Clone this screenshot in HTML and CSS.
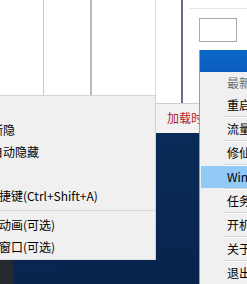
FILE: index.html
```html
<!DOCTYPE html>
<html lang="zh-CN">
<head>
<meta charset="utf-8">
<title>菜单</title>
<link rel="stylesheet" href="styles.css">
</head>
<body>
<div class="desktop">
  <div class="taskcorner"></div>

  <div class="win-back">
    <div class="top-area">
      <div class="cell c1"></div>
      <div class="cell c2"></div>
      <div class="cell c3"></div>
      <div class="pane">
        <div class="pane-gap"></div>
        <div class="divider"></div>
        <div class="pane-right">
          <div class="rule"></div>
          <div class="field"></div>
        </div>
      </div>
    </div>
    <div class="status"><span class="status-text">加载时间：0.3秒</span></div>
  </div>

  <div class="menu-left">
    <div class="item inset">置顶</div>
    <div class="item inset">淡入渐隐</div>
    <div class="item inset">开机自动隐藏</div>
    <div class="item inset">锁定</div>
    <div class="item">全局快捷键(Ctrl+Shift+A)</div>
    <div class="sep"></div>
    <div class="item">弹出框动画(可选)</div>
    <div class="item">显示主窗口(可选)</div>
  </div>

  <div class="menu-right">
    <div class="menu-head"></div>
    <div class="ritem disabled">最新版本</div>
    <div class="ritem">重启程序</div>
    <div class="rsep"></div>
    <div class="ritem">流量监控</div>
    <div class="rsep"></div>
    <div class="ritem">修仙模式</div>
    <div class="rsep"></div>
    <div class="ritem active">Win7风格</div>
    <div class="rsep"></div>
    <div class="ritem">任务管理器</div>
    <div class="rsep"></div>
    <div class="ritem">开机启动</div>
    <div class="rsep"></div>
    <div class="ritem">关于</div>
    <div class="rsep"></div>
    <div class="ritem">退出</div>
  </div>
</div>
</body>
</html>
```
FILE: styles.css
```css
* { box-sizing: border-box; }
html, body { margin: 0; padding: 0; }
body {
  width: 247px;
  height: 284px;
  overflow: hidden;
  font-family: "Noto Sans CJK SC", "Noto Sans", sans-serif;
  font-size: 12px;
  color: #000;
}
.desktop {
  position: relative;
  width: 247px;
  height: 284px;
  overflow: hidden;
  background: linear-gradient(170deg, #0d386c 0%, #0a2d5c 40%, #07234a 100%);
}
.taskcorner {
  position: absolute;
  left: 0;
  top: 260px;
  width: 13px;
  height: 24px;
  background: #262a30;
}

/* background white window */
.win-back {
  position: absolute;
  left: 0;
  top: 0;
  width: 247px;
  height: 133px;
  background: #fff;
  display: flex;
  flex-direction: column;
}
.top-area {
  height: 103px;
  display: flex;
}
.cell { height: 100%; }
.c1 { width: 44px; border-right: 1px solid #c9c9c9; }
.c2 { width: 48px; border-right: 2px solid #b9b9b9; }
.c3 { width: 64px; border-right: 1px solid #dedede; }
.pane { flex: 1; display: flex; }
.pane-gap { width: 25px; }
.divider { width: 2px; background: #6e6a8e; }
.pane-right { flex: 1; padding-top: 8px; padding-left: 7px; }
.rule { height: 1px; background: #e4e4e4; }
.field {
  margin-top: 9px;
  margin-left: 9px;
  width: 38px;
  height: 24px;
  border: 1px solid #a9a9a9;
  background: #fff;
}
.status {
  flex: 1;
  border-top: 1px solid #cfcfcf;
  background: #f2f2f2;
  padding-left: 167px;
  line-height: 28px;
  white-space: nowrap;
}
.status-text { color: #b3262c; }

/* left context menu */
.menu-left {
  position: absolute;
  left: -37px;
  top: 95px;
  width: 193px;
  height: 165px;
  background: #f0f0f0;
  border-right: 1px solid #cfcfcf;
  border-bottom: 1px solid #e2e2e2;
  border-top: 1px solid #d4d4d4;
  padding-top: 1px;
}
.item {
  height: 22px;
  line-height: 22px;
  white-space: nowrap;
}
.item.inset { padding-left: 4px; }
.sep {
  height: 7px;
  margin: 0;
  background: linear-gradient(#f0f0f0 3px, #d7d7d7 3px, #d7d7d7 4px, #f0f0f0 4px);
}

/* right tray menu */
.menu-right {
  position: absolute;
  left: 199px;
  top: 50px;
  width: 120px;
  height: 234px;
  background: #f0f0f0;
  border-left: 1px solid #9c9c9c;
}
.menu-head {
  height: 22px;
  background: linear-gradient(#0b66c8, #0a5dbd);
}
.ritem {
  height: 22px;
  line-height: 22px;
  margin-left: 1px;
  padding-left: 26px;
  white-space: nowrap;
}
.ritem.disabled { color: #6d6d6d; }
.ritem.active { background: #91c9f7; }
.rsep {
  height: 2px;
  margin-left: 23px;
  border-top: 1px solid #d7d7d7;
  border-bottom: 1px solid #fbfbfb;
}
```
